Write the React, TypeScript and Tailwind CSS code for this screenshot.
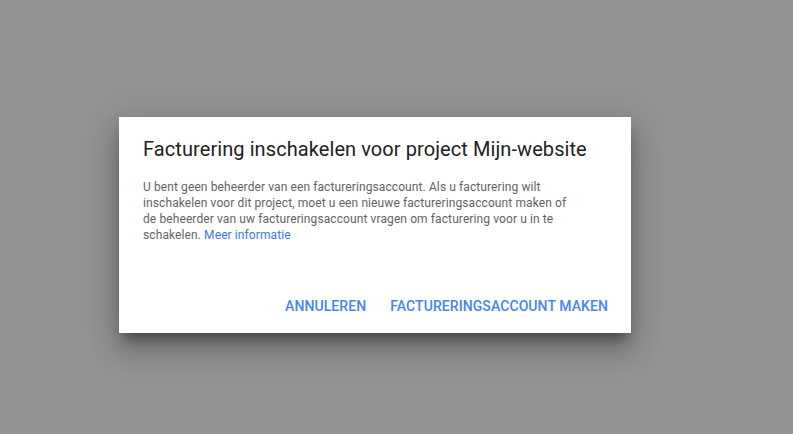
export default function App() {
  return (
    <div className="min-h-[434px] w-full bg-[#939393] pl-[119px] pt-[117px] font-['Roboto',sans-serif]">
      {/* Dialog */}
      <div className="w-[512px] bg-white shadow-[0_10px_12px_-5px_rgba(0,0,0,0.4),0_18px_26px_2px_rgba(0,0,0,0.16),0_6px_30px_5px_rgba(0,0,0,0.12)]">
        <div className="px-6 pt-5">
          <h2 className="text-[20px] leading-6 font-normal tracking-[0.08px] text-[#202124]">
            Facturering inschakelen voor project Mijn-website
          </h2>
          <p className="mt-[18px] w-[432px] text-[12px] leading-4 tracking-[0.1px] text-[#5f6368]">
            U bent geen beheerder van een factureringsaccount. Als u facturering wilt inschakelen voor dit project,
            moet u een nieuwe factureringsaccount maken of de beheerder van uw factureringsaccount vragen om
            facturering voor u in te schakelen.{" "}
            <a className="text-[#3b78e7]">Meer informatie</a>
          </p>
        </div>
        <div className="mt-[45px] flex justify-end gap-2 pb-[9px] pr-[15px]">
          <button className="h-9 px-2 text-[14px] font-medium uppercase tracking-[0.08px] text-[#4285f4]">
            Annuleren
          </button>
          <button className="h-9 px-2 text-[14px] font-medium uppercase tracking-[0.08px] text-[#4285f4]">
            Factureringsaccount maken
          </button>
        </div>
      </div>
    </div>
  )
}
